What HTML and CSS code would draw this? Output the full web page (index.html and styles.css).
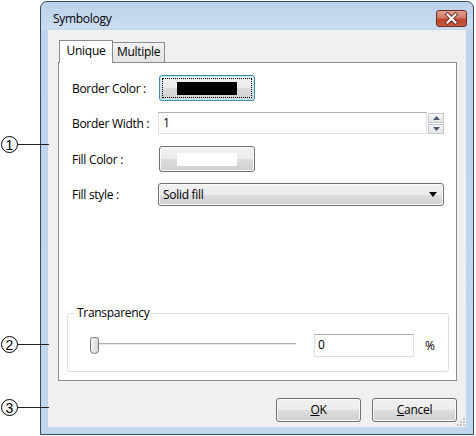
FILE: index.html
```html
<!DOCTYPE html>
<html>
<head>
    <link rel="stylesheet" href="styles.css">
</head>
<body>
    <div class="page">
        <!-- numbered callouts on the left edge -->
        <div class="callout c1"><span class="num">1</span><span class="leader"></span></div>
        <div class="callout c2"><span class="num">2</span><span class="leader"></span></div>
        <div class="callout c3"><span class="num">3</span><span class="leader"></span></div>

        <div class="window">
            <div class="titlebar">
                <span class="title">Symbology</span>
                <div class="close">
                    <svg width="29" height="15" viewBox="0 0 29 15">
                        <path d="M10.5 3.5 L18.5 11.5 M18.5 3.5 L10.5 11.5" stroke="#6a2a20" stroke-width="4" stroke-linecap="square"/>
                        <path d="M10.5 3.5 L18.5 11.5 M18.5 3.5 L10.5 11.5" stroke="#fff" stroke-width="2.2" stroke-linecap="square"/>
                    </svg>
                </div>
            </div>

            <div class="client">
                <div class="tabs">
                    <div class="tab active">Unique</div>
                    <div class="tab">Multiple</div>
                </div>

                <div class="tab-page">
                    <div class="row first">
                        <label>Border Color :</label>
                        <div class="btn color-btn focused"><span class="swatch" style="background:#000"></span></div>
                    </div>
                    <div class="row">
                        <label>Border Width :</label>
                        <div class="textbox wide">1</div>
                        <div class="spinner">
                            <div class="spin up"><svg width="7" height="4" viewBox="0 0 7 4"><path d="M0 4 L3.5 0 L7 4 Z" fill="#4b5a72"/></svg></div>
                            <div class="spin down"><svg width="7" height="4" viewBox="0 0 7 4"><path d="M0 0 L3.5 4 L7 0 Z" fill="#4b5a72"/></svg></div>
                        </div>
                    </div>
                    <div class="row">
                        <label>Fill Color :</label>
                        <div class="btn color-btn"><span class="swatch" style="background:#fff"></span></div>
                    </div>
                    <div class="row">
                        <label>Fill style :</label>
                        <div class="btn combo">
                            <span>Solid fill</span>
                            <svg width="8" height="5" viewBox="0 0 8 5"><path d="M0 0 L8 0 L4 5 Z" fill="#000"/></svg>
                        </div>
                    </div>

                    <fieldset class="group">
                        <legend>Transparency</legend>
                        <div class="slider-row">
                            <svg class="slider" width="207" height="18" viewBox="0 0 207 18">
                                <defs>
                                    <linearGradient id="thumbFill" x1="0" y1="0" x2="1" y2="0">
                                        <stop offset="0" stop-color="#f7f7f7"/>
                                        <stop offset="1" stop-color="#d6d6d6"/>
                                    </linearGradient>
                                </defs>
                                <line x1="5" y1="6.5" x2="207" y2="6.5" stroke="#a9abaf"/>
                                <line x1="5" y1="7.5" x2="207" y2="7.5" stroke="#e6e8ea"/>
                                <path d="M1.5 2.5 Q1.5 0.5 3.5 0.5 L7.5 0.5 Q9.5 0.5 9.5 2.5 L9.5 13 Q9.5 16.5 5.5 16.5 Q1.5 16.5 1.5 13 Z" fill="url(#thumbFill)" stroke="#7a7a7a"/>
                            </svg>
                            <div class="textbox value">0</div>
                            <span class="unit">%</span>
                        </div>
                    </fieldset>
                </div>

                <div class="buttons">
                    <div class="btn push"><u>O</u>K</div>
                    <div class="btn push"><u>C</u>ancel</div>
                </div>

                <svg class="grip" width="10" height="10" viewBox="0 0 10 10">
                    <g fill="#c2c2c2">
                        <rect x="7" y="1" width="2" height="2"/>
                        <rect x="4" y="4" width="2" height="2"/>
                        <rect x="7" y="4" width="2" height="2"/>
                        <rect x="1" y="7" width="2" height="2"/>
                        <rect x="4" y="7" width="2" height="2"/>
                        <rect x="7" y="7" width="2" height="2"/>
                    </g>
                </svg>
            </div>
        </div>
    </div>
</body>
</html>
```

FILE: styles.css
```css
* {
    box-sizing: border-box;
}
body {
    margin: 0;
    background: #fff;
    color: #000;
    font-family: "Open Sans", "Noto Sans", sans-serif;
    font-size: 12px;
    letter-spacing: -0.3px;
}
.page {
    position: relative;
    width: 476px;
    height: 436px;
    padding: 1px 0 0 40px;
}

/* callouts */
.callout {
    position: absolute;
    left: 1px;
    z-index: 2;
    display: flex;
    align-items: center;
}
.callout .num {
    width: 17px;
    height: 17px;
    border: 1px solid #000;
    border-radius: 50%;
    display: flex;
    align-items: center;
    justify-content: center;
    font-family: "Liberation Sans", sans-serif;
    font-size: 14px;
    letter-spacing: 0;
    line-height: 1;
}
.callout .leader {
    width: 31px;
    height: 1px;
    background: #222;
}
.c1 { top: 136px; }
.c2 { top: 336px; }
.c3 { top: 399px; }

/* window frame */
.window {
    width: 434px;
    height: 434px;
    border: 1px solid #35495d;
    border-radius: 7px 7px 0 0;
    background: linear-gradient(#bcd3ec, #cadcf0 26px, #bfd4ec 30px, #c2d7ee);
    padding: 0 7px 7px;
    display: flex;
    flex-direction: column;
}
.titlebar {
    height: 28px;
    display: flex;
    justify-content: space-between;
    align-items: flex-start;
    padding-left: 5px;
}
.title {
    margin-top: 9px;
    line-height: 16px;
}
.close {
    margin-top: 8px;
    margin-right: -1px;
    width: 31px;
    height: 17px;
    border: 1px solid #6d2c24;
    border-radius: 3px;
    background: linear-gradient(#e0a092, #d07a69 45%, #c2442f 55%, #c85a40);
    display: flex;
}

.client {
    position: relative;
    flex: 1;
    background: #f0f0f0;
    padding: 10px 9px 0 10px;
    display: flex;
    flex-direction: column;
}

/* tabs */
.tabs {
    height: 22px;
    display: flex;
    align-items: flex-end;
    padding-left: 1px;
}
.tab {
    height: 20px;
    width: 53px;
    margin-left: -1px;
    border: 1px solid #898c95;
    border-bottom: none;
    background: linear-gradient(#f2f2f2, #e3e3e3);
    text-align: center;
    line-height: 18px;
}
.tab.active {
    position: relative;
    z-index: 1;
    height: 23px;
    width: 54px;
    margin-left: 0;
    margin-bottom: -1px;
    background: #fff;
    line-height: 19px;
}
.tab-page {
    height: 319px;
    border: 1px solid #898c95;
    background: #fff;
    padding: 12px 7px 8px 8px;
    display: flex;
    flex-direction: column;
}

/* form rows */
.row {
    display: flex;
    align-items: center;
    margin-left: 5px;
    margin-top: 11px;
}
.row.first {
    margin-top: 0;
}
.row:nth-child(3) {
    margin-top: 12px;
}
.row label {
    width: 86px;
}
.btn {
    border: 1px solid #707070;
    border-radius: 3px;
    background: linear-gradient(#f2f2f2, #ebebeb 50%, #dddddd 51%, #cfcfcf);
    box-shadow: inset 0 0 0 1px #fbfbfb;
}
.color-btn {
    width: 96px;
    height: 26px;
    margin-left: 1px;
    display: flex;
    align-items: center;
    justify-content: center;
}
.color-btn.focused {
    border-color: #3c8fae;
    box-shadow: inset 0 0 0 1px #bfeaf5;
    outline: 1px dotted #000;
    outline-offset: -4px;
}
.swatch {
    width: 60px;
    height: 13px;
}
.textbox {
    height: 22px;
    border: 1px solid #dbdfe6;
    border-top-color: #abadb3;
    background: #fff;
    padding-left: 4px;
    line-height: 20px;
}
.textbox.wide {
    width: 269px;
}
.spinner {
    margin-left: 1px;
    display: flex;
    flex-direction: column;
    gap: 1px;
}
.spin {
    width: 16px;
    height: 10px;
    border: 1px solid #c3c8cf;
    background: linear-gradient(#f6f6f6, #e4e4e4);
    display: flex;
    align-items: center;
    justify-content: center;
}
.combo {
    width: 286px;
    height: 23px;
    display: flex;
    align-items: center;
    justify-content: space-between;
    padding: 0 6px 0 4px;
}

/* transparency group */
.group {
    margin: auto 0 0;
    padding: 0 0 14px;
    border: 1px solid #d5dfe5;
    border-radius: 3px;
}
.group legend {
    margin-left: 7px;
    padding: 0 2px;
    line-height: 16px;
}
.slider-row {
    margin-top: 13px;
    padding-left: 21px;
    display: flex;
    align-items: center;
}
.slider {
    display: block;
}
.textbox.value {
    width: 100px;
    height: 23px;
    margin-left: 18px;
    padding-left: 3px;
}
.unit {
    margin-left: 11px;
}

/* dialog buttons */
.buttons {
    margin-top: 17px;
    display: flex;
    justify-content: flex-end;
    gap: 11px;
}
.push {
    width: 85px;
    height: 24px;
    text-align: center;
    line-height: 22px;
}
.grip {
    position: absolute;
    right: 0;
    bottom: 0;
}
```
